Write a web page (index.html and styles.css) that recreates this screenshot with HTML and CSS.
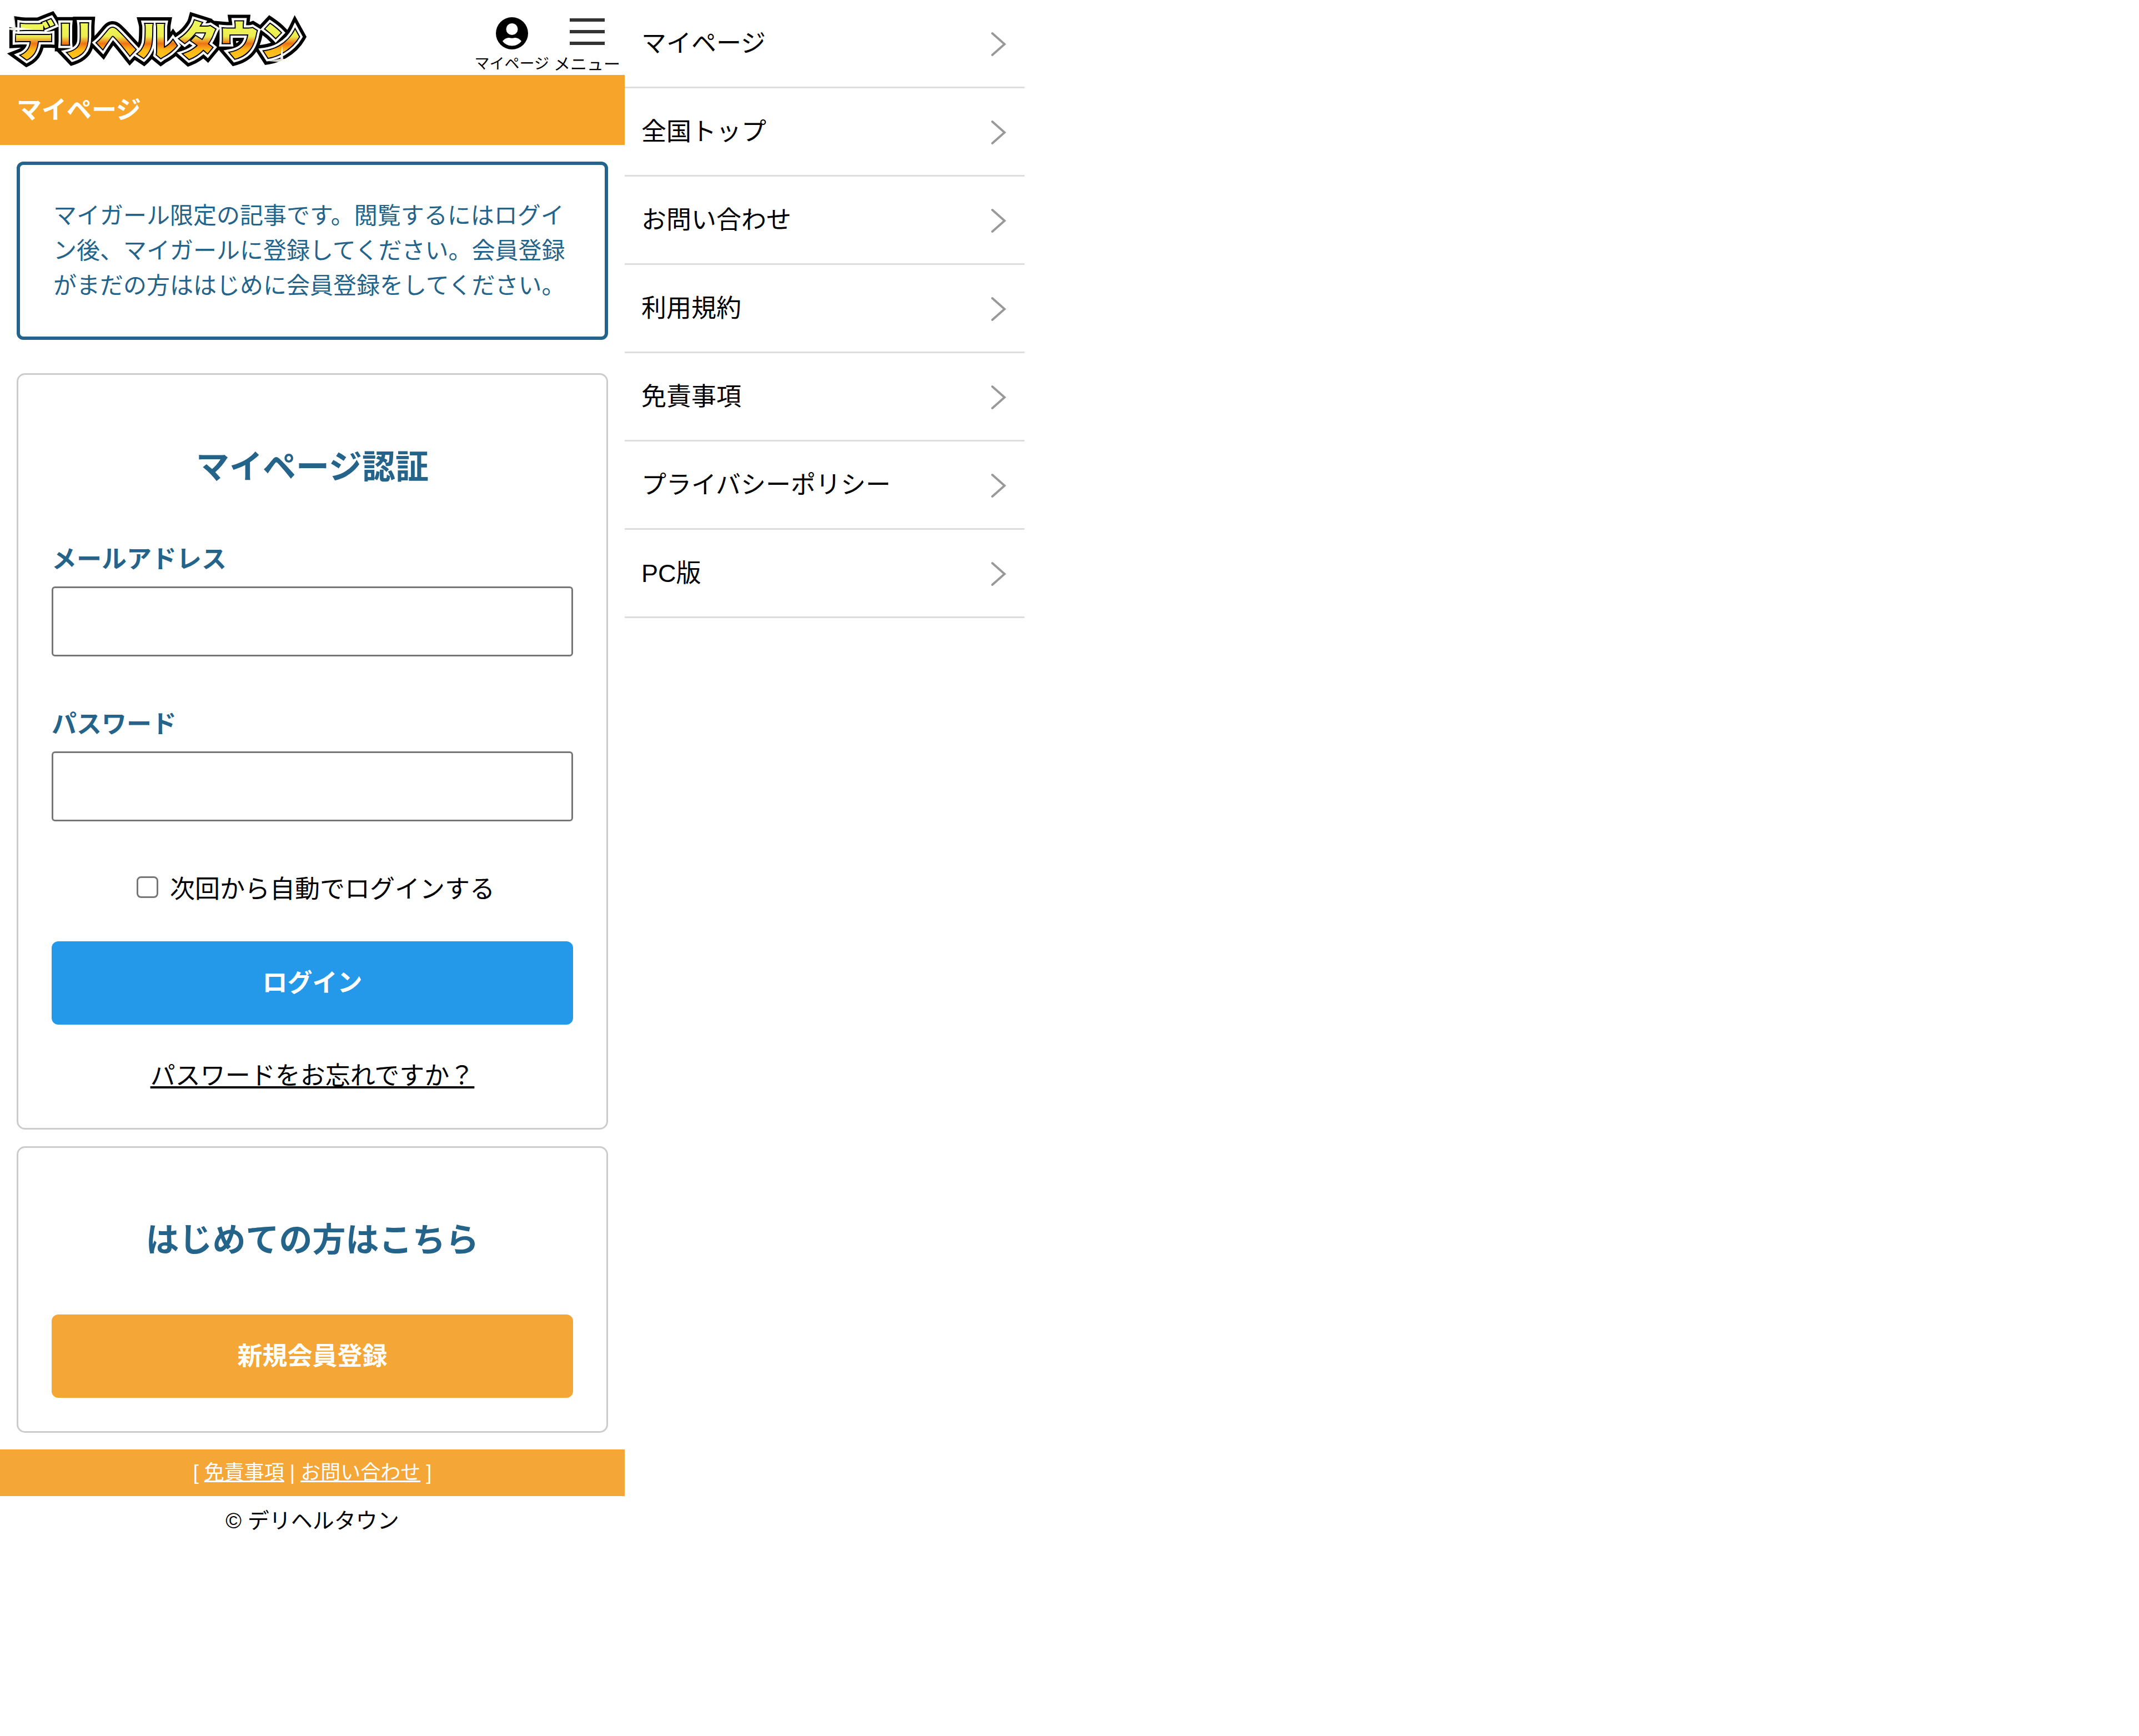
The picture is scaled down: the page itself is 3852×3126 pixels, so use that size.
FILE: index.html
```html
<!DOCTYPE html>
<html lang="ja">
<head>
  <meta charset="UTF-8">
  <meta name="viewport" content="width=device-width, initial-scale=1.0">
  <title>マイページ | デリヘルタウン</title>
  <link rel="stylesheet" href="styles.css">
</head>
<body>
  <div class="page">
    <div class="main">
      <header class="header">
        <a href="#" class="logo">
          <svg viewBox="0 0 570 135" width="570" height="135">
            <defs>
              <linearGradient id="logo-fill" gradientUnits="userSpaceOnUse" x1="0" y1="46" x2="0" y2="102">
                <stop offset="0" stop-color="#eef75a"/>
                <stop offset="0.35" stop-color="#ecec4e"/>
                <stop offset="0.58" stop-color="#ee7216"/>
                <stop offset="0.78" stop-color="#fbb818"/>
                <stop offset="1" stop-color="#fbc21c"/>
              </linearGradient>
              <radialGradient id="spark">
                <stop offset="0" stop-color="#fff"/>
                <stop offset="1" stop-color="#fffff0" stop-opacity="0.8"/>
              </radialGradient>
            </defs>
            <use href="#logo-text" class="logo-outer"/>
            <use href="#logo-text" class="logo-white"/>
            <use href="#logo-text" class="logo-inner"/>
            <text id="logo-text" class="logo-text" x="24" y="100">デリヘルタウン</text>
            <path d="M26 28 L28 49 L60 52 L28 55 L26 80 L24 55 L10 52 L24 49Z" fill="url(#spark)"/>
            <path d="M508 80 L510 106 L532 110 L510 112 L508 114 L505 112 L482 110 L505 106Z" fill="url(#spark)"/>
          </svg>
        </a>
        <nav class="header-nav">
          <a href="#" class="header-link">
            <svg class="user-icon" viewBox="0 0 58 58">
              <circle cx="29" cy="29" r="29" fill="#000"/>
              <circle cx="29" cy="21.5" r="10.5" fill="#fff"/>
              <path d="M12 43C16 38.500 20 37 24 37Q29 38.500 34 37C38 37 42 38.500 46 43C42 48.500 36 51.500 29 51.500S16 48.500 12 43Z" fill="#fff"/>
            </svg>
            <span>マイページ</span>
          </a>
          <button type="button" class="header-link menu-button">
            <span class="bars"><i></i><i></i><i></i></span>
            <span>メニュー</span>
          </button>
        </nav>
      </header>

      <h1 class="page-title">マイページ</h1>

      <p class="message">マイガール限定の記事です。閲覧するにはログイン後、マイガールに登録してください。会員登録がまだの方ははじめに会員登録をしてください。</p>

      <form class="card">
        <h2>マイページ認証</h2>
        <div class="field">
          <label for="email">メールアドレス</label>
          <input type="email" id="email">
        </div>
        <div class="field">
          <label for="password">パスワード</label>
          <input type="password" id="password">
        </div>
        <div class="remember">
          <input type="checkbox" id="remember">
          <label for="remember">次回から自動でログインする</label>
        </div>
        <button type="submit" class="button login">ログイン</button>
        <a href="#" class="forgot">パスワードをお忘れですか？</a>
      </form>

      <section class="card">
        <h2>はじめての方はこちら</h2>
        <a href="#" class="button register">新規会員登録</a>
      </section>

      <footer>
        <div class="footer-links">[ <a href="#">免責事項</a> | <a href="#">お問い合わせ</a> ]</div>
        <p class="copyright">© デリヘルタウン</p>
      </footer>
    </div>

    <nav class="drawer">
      <a href="#">マイページ <svg viewBox="0 0 27 45"><path d="M2 3L24 22.500L2 42"/></svg></a>
      <a href="#">全国トップ <svg viewBox="0 0 27 45"><path d="M2 3L24 22.500L2 42"/></svg></a>
      <a href="#">お問い合わせ <svg viewBox="0 0 27 45"><path d="M2 3L24 22.500L2 42"/></svg></a>
      <a href="#">利用規約 <svg viewBox="0 0 27 45"><path d="M2 3L24 22.500L2 42"/></svg></a>
      <a href="#">免責事項 <svg viewBox="0 0 27 45"><path d="M2 3L24 22.500L2 42"/></svg></a>
      <a href="#">プライバシーポリシー <svg viewBox="0 0 27 45"><path d="M2 3L24 22.500L2 42"/></svg></a>
      <a href="#">PC版 <svg viewBox="0 0 27 45"><path d="M2 3L24 22.500L2 42"/></svg></a>
    </nav>
  </div>
</body>
</html>
```

FILE: styles.css
```css
* {
  box-sizing: border-box;
}

body {
  margin: 0;
  background-color: #fff;
  color: #000;
  font-family: "Liberation Sans", "Noto Sans CJK JP", sans-serif;
  font-size: 45px;
  line-height: 66px;
}

a {
  color: inherit;
}

h1, h2, p {
  margin: 0;
}

.page {
  display: grid;
  grid-template-columns: 375fr 240fr 669fr;
  align-items: start;
}

/* header */
.header {
  display: flex;
  justify-content: space-between;
  height: 135px;
  padding-right: 8px;
}

.logo svg {
  display: block;
  overflow: visible;
}

.logo-text {
  font-family: "Noto Sans CJK JP", sans-serif;
  font-size: 74px;
  font-weight: 900;
  fill: url(#logo-fill);
}

.logo-outer {
  stroke: #000;
  stroke-width: 24px;
}

.logo-white {
  stroke: #fff;
  stroke-width: 12px;
}

.logo-inner {
  stroke: #000;
  stroke-width: 4px;
}

.header-nav {
  display: flex;
  gap: 8px;
}

.header-link {
  display: flex;
  flex-direction: column;
  align-items: center;
  gap: 6px;
  padding: 30px 0 0;
  border: none;
  background: none;
  color: #000;
  font-family: inherit;
  font-size: 27px;
  line-height: 39px;
  text-decoration: none;
}

.user-icon {
  width: 58px;
  height: 60px;
}

.menu-button {
  font-size: 30px;
  cursor: pointer;
}

.bars {
  display: flex;
  flex-direction: column;
  gap: 15px;
  width: 63px;
  height: 60px;
  padding-top: 3px;
}

.bars i {
  height: 6px;
  background-color: #333;
}

.page-title {
  padding: 31px 30px 29px;
  background-color: #f7a52a;
  color: #fff;
  font-size: 45px;
  line-height: 66px;
}

/* boxes */
.message {
  margin: 30px 30px 60px;
  padding: 60px;
  border: 6px solid #24638a;
  border-radius: 12px;
  color: #24638a;
  font-size: 42px;
  line-height: 63px;
}

.card {
  display: flex;
  flex-direction: column;
  margin: 0 30px 30px;
  padding: 60px;
  border: 3px solid #ccc;
  border-radius: 15px;
}

.card h2 {
  margin: 62px 0 88px;
  color: #24638a;
  font-size: 60px;
  line-height: 90px;
  text-align: center;
}

.field {
  display: flex;
  flex-direction: column;
  gap: 15px;
  margin-bottom: 90px;
}

.field label {
  color: #24638a;
  font-weight: bold;
}

.field input {
  width: 100%;
  height: 126px;
  padding: 0 24px;
  border: 3px solid #767676;
  border-radius: 6px;
  background-color: #fff;
  font-size: 45px;
}

.remember {
  display: flex;
  justify-content: center;
  gap: 21px;
  margin-bottom: 60px;
  padding-left: 12px;
}

.remember input {
  appearance: none;
  width: 39px;
  height: 39px;
  margin: 9px 0 0;
  border: 3px solid #767676;
  border-radius: 8px;
  background-color: #fff;
}

.button {
  display: block;
  padding: 43px 0 41px;
  border: none;
  border-radius: 12px;
  color: #fff;
  font-family: inherit;
  font-size: 45px;
  font-weight: bold;
  line-height: 66px;
  text-align: center;
  text-decoration: none;
  cursor: pointer;
}

.login {
  background-color: #2498e9;
}

.register {
  background-color: #f4a637;
}

.forgot {
  align-self: center;
  margin-top: 60px;
  text-decoration-skip-ink: none;
}

/* footer */
.footer-links {
  padding: 15px 0;
  background-color: #f4a637;
  color: #fff;
  font-size: 36px;
  line-height: 54px;
  text-align: center;
}

.copyright {
  padding: 15px 0;
  font-size: 39px;
  line-height: 60px;
  text-align: center;
}

/* drawer menu */
.drawer a {
  display: flex;
  justify-content: space-between;
  align-items: center;
  padding: 46px 33px 44px 30px;
  border-bottom: 3px solid #ddd;
  text-decoration: none;
}

.drawer svg {
  width: 27px;
  height: 45px;
  fill: none;
  stroke: #999;
  stroke-width: 4px;
  stroke-linecap: round;
}
```
